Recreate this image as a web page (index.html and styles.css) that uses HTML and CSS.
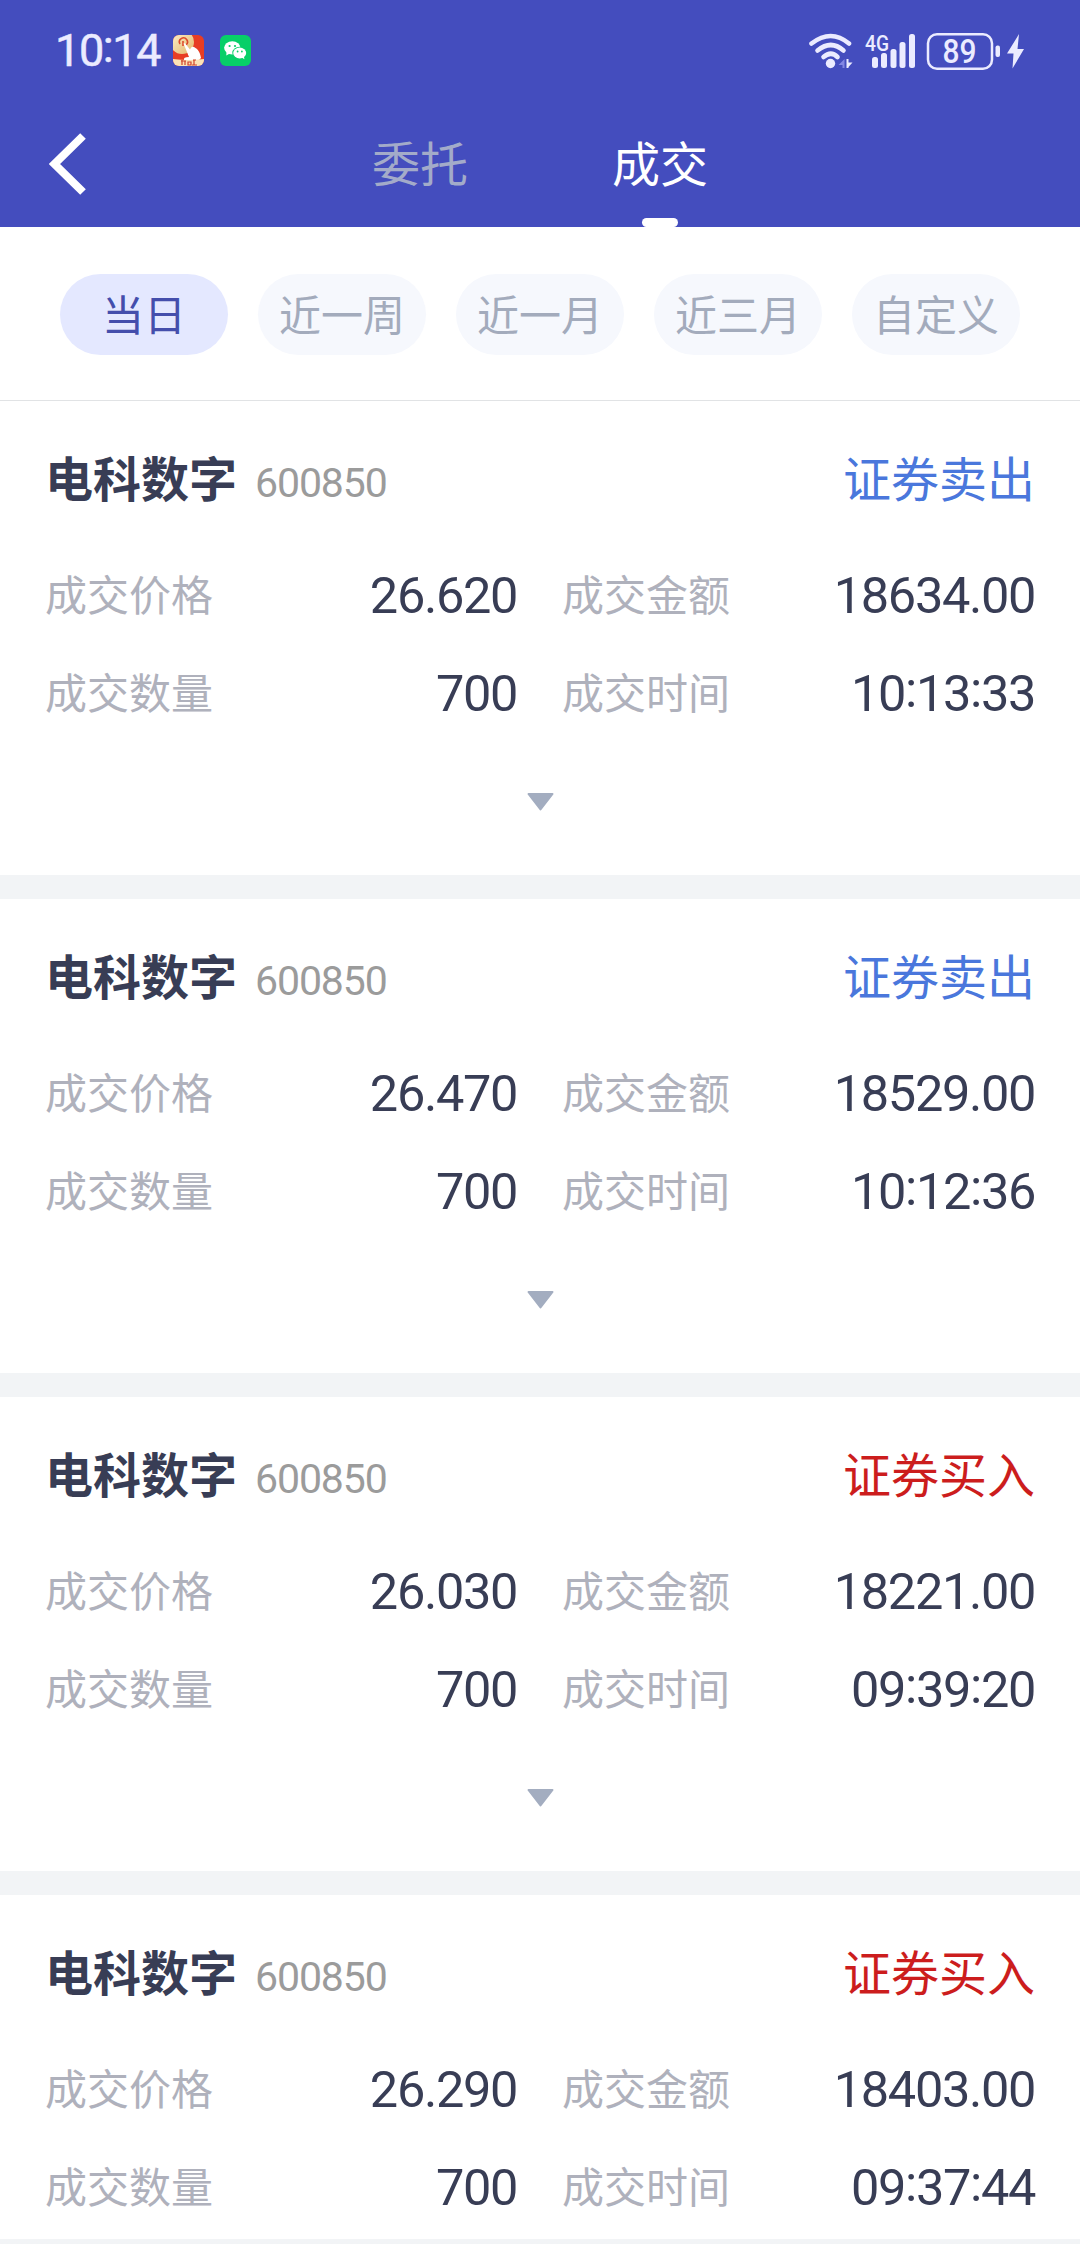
FILE: index.html
```html
<!DOCTYPE html>
<html lang="zh-CN">
<head>
<meta charset="utf-8">
<title>成交</title>
<link rel="stylesheet" href="styles.css">
</head>
<body>
<div class="app">
  <header class="header">
    <div class="status">
      <span class="clock">10<i class="colon">:</i>14</span>
      <svg class="app-icon" width="31" height="31" viewBox="0 0 31 31">
        <defs>
          <clipPath id="tile"><rect width="31" height="31" rx="6"/></clipPath>
          <linearGradient id="gold" x1="0" y1="0" x2="1" y2="1"><stop offset="0" stop-color="#fff3d6"/><stop offset="1" stop-color="#e3b869"/></linearGradient>
        </defs>
        <g clip-path="url(#tile)">
          <rect width="31" height="31" fill="#e83d24"/>
          <circle cx="9" cy="7" r="12" fill="url(#gold)"/>
          <path d="M7 9a4 4 0 1 1 6 1M10 6v5" fill="none" stroke="#dc4a2c" stroke-width="1.6"/>
          <path d="M10.500 8.500q1.500-1 2.500 1l4 5q1-3.500 4-2.500l3 2q3 3 4 9l-3 3-14-1q-1-3 5-3z" fill="#fff"/>
          <path d="M0 24q15 2 31 0v7H0z" fill="#fbe3b6"/>
          <path d="M8 26h5M9 25v5M12 26v4M15 27h3v3h-3zM20 25h3M21 25v5M19 30h5" fill="none" stroke="#d2422a" stroke-width="1.2"/>
        </g>
      </svg>
      <svg class="wechat-icon" width="31" height="31" viewBox="0 0 31 31">
        <rect width="31" height="31" rx="6" fill="#07cf68"/>
        <path d="M6.500 17l-.2 3.500 3.500-2z" fill="#fff"/>
        <ellipse cx="12.300" cy="12.800" rx="8.200" ry="6.600" fill="#fff"/>
        <ellipse cx="19.700" cy="18" rx="7.400" ry="6.200" fill="#07cf68"/>
        <ellipse cx="19.700" cy="18" rx="6.500" ry="5.400" fill="#fff"/>
        <path d="M21 22l3.400 2.200-.6-3.200z" fill="#fff"/>
        <g fill="#07cf68"><circle cx="9.600" cy="11" r="1.100"/><circle cx="15" cy="11" r="1.100"/><circle cx="17.600" cy="16.500" r=".9"/><circle cx="21.900" cy="16.500" r=".9"/></g>
      </svg>
      <svg class="signals" width="218" height="44" viewBox="0 -2 218 44">
        <g fill="none" stroke="#ebebff" stroke-width="4.600" stroke-linecap="round">
          <path d="M4.500 12.500Q24 -2.500 42 12.500"/>
          <path d="M10.500 19.500Q24 8.500 36.500 19.500"/>
          <path d="M16.500 26Q24 19.500 30.500 26"/>
        </g>
        <circle cx="23.500" cy="32.500" r="4.700" fill="#ebebff"/>
        <path d="M37.500 28v9h-2v-3h-4z" fill="#8387e4"/>
        <path d="M39.500 28h2v3.500h4l-4 4.500v1h-2z" fill="#ebebff"/>
        <text class="network" x="58" y="20" textLength="24" lengthAdjust="spacingAndGlyphs">4G</text>
        <g fill="#ebebff">
          <rect x="65" y="26" width="6" height="11" rx="2.500"/>
          <rect x="74" y="22" width="6" height="15" rx="2.500"/>
          <rect x="83.500" y="18" width="6" height="19" rx="2.500"/>
          <rect x="92.500" y="11" width="6" height="26" rx="2.500"/>
          <rect x="102" y="3" width="6" height="34" rx="2.500"/>
          <rect x="188.500" y="14.500" width="4.500" height="11.500" rx="2"/>
          <path d="M212 3L200 22.500H206.500L205.500 37.500L217 18H210.500Z"/>
        </g>
        <rect x="121" y="3.200" width="64" height="34.600" rx="9" fill="none" stroke="#ebebff" stroke-width="2.500"/>
        <text class="battery" x="135.500" y="32" textLength="34" lengthAdjust="spacingAndGlyphs">89</text>
      </svg>
    </div>
    <nav class="nav">
      <svg class="back" width="38" height="62" viewBox="0 0 38 62"><path d="M34 3L5.500 31L34 59" fill="none" stroke="#fff" stroke-width="8"/></svg>
      <a class="tab">委托</a>
      <a class="tab tab-active">成交</a>
    </nav>
  </header>

  <div class="filters">
    <span class="chip chip-active">当日</span>
    <span class="chip">近一周</span>
    <span class="chip">近一月</span>
    <span class="chip">近三月</span>
    <span class="chip">自定义</span>
  </div>

  <main class="list">
    <section class="card">
      <div class="card-head"><h2 class="name">电科数字</h2><span class="code">600850</span><span class="side sell">证券卖出</span></div>
      <dl class="grid">
        <dt>成交价格</dt><dd>26<i>.</i>620</dd><dt>成交金额</dt><dd>18634<i>.</i>00</dd>
        <dt>成交数量</dt><dd>700</dd><dt>成交时间</dt><dd>10<i class="colon">:</i>13<i class="colon">:</i>33</dd>
      </dl>
      <svg class="more" width="27" height="18" viewBox="0 0 27 18"><path d="M1.500 1H25.500L13.500 16.500Z"/></svg>
    </section>
    <section class="card">
      <div class="card-head"><h2 class="name">电科数字</h2><span class="code">600850</span><span class="side sell">证券卖出</span></div>
      <dl class="grid">
        <dt>成交价格</dt><dd>26<i>.</i>470</dd><dt>成交金额</dt><dd>18529<i>.</i>00</dd>
        <dt>成交数量</dt><dd>700</dd><dt>成交时间</dt><dd>10<i class="colon">:</i>12<i class="colon">:</i>36</dd>
      </dl>
      <svg class="more" width="27" height="18" viewBox="0 0 27 18"><path d="M1.500 1H25.500L13.500 16.500Z"/></svg>
    </section>
    <section class="card">
      <div class="card-head"><h2 class="name">电科数字</h2><span class="code">600850</span><span class="side buy">证券买入</span></div>
      <dl class="grid">
        <dt>成交价格</dt><dd>26<i>.</i>030</dd><dt>成交金额</dt><dd>18221<i>.</i>00</dd>
        <dt>成交数量</dt><dd>700</dd><dt>成交时间</dt><dd>09<i class="colon">:</i>39<i class="colon">:</i>20</dd>
      </dl>
      <svg class="more" width="27" height="18" viewBox="0 0 27 18"><path d="M1.500 1H25.500L13.500 16.500Z"/></svg>
    </section>
    <section class="card">
      <div class="card-head"><h2 class="name">电科数字</h2><span class="code">600850</span><span class="side buy">证券买入</span></div>
      <dl class="grid">
        <dt>成交价格</dt><dd>26<i>.</i>290</dd><dt>成交金额</dt><dd>18403<i>.</i>00</dd>
        <dt>成交数量</dt><dd>700</dd><dt>成交时间</dt><dd>09<i class="colon">:</i>37<i class="colon">:</i>44</dd>
      </dl>
    </section>
  </main>
  <footer class="bottom"></footer>
</div>
</body>
</html>
```
FILE: styles.css
```css
* { box-sizing: border-box; }
body { margin: 0; background: #fff; font-family: "Noto Sans CJK SC", sans-serif; }
svg { display: block; flex: none; }
i { font-style: normal; }
.app { display: flex; flex-direction: column; width: 1080px; height: 2244px; overflow: hidden; }

.header { flex: none; height: 227px; background: #444dbe; }
.status { display: flex; align-items: center; height: 101px; padding: 0 55px; }
.clock { width: 118px; font: 400 45px/61px Roboto, sans-serif; letter-spacing: -1.400px; color: #ebebff; -webkit-text-stroke: 0.5px #ebebff; }
.colon { line-height: 0; vertical-align: 4px; }
.wechat-icon { margin-left: 16px; }
.signals { margin-left: auto; }
.network { font: 500 22.500px Roboto, sans-serif; fill: #ebebff; }
.battery { font: 500 33px Roboto, sans-serif; fill: #ebebff; }
.nav { display: flex; align-items: center; height: 126px; padding-left: 49px; }
.back { margin-right: 285px; }
.tab { position: relative; height: 126px; font-size: 48px; line-height: 121px; color: #a3abc9; }
.tab-active { margin-left: 144px; color: #fff; }
.tab-active::after { content: ""; position: absolute; left: 30px; bottom: 0; width: 36px; height: 9px; border-radius: 5px; background: #fff; }

.filters { flex: none; display: flex; gap: 30px; height: 174px; padding: 47px 60px 0; border-bottom: 1px solid #e1e3e5; }
.chip { width: 168px; height: 81px; border-radius: 41px; background: #f6f8fd; color: #a3abbc; font-size: 42px; line-height: 78px; text-align: center; }
.chip-active { background: #e4e8ff; color: #444eac; }

.list { flex: 1; min-height: 0; overflow: hidden; }
.card { display: flex; flex-direction: column; height: 498px; padding: 39px 45px 0; border-bottom: 24px solid #f2f4f6; }
.card-head { display: flex; align-items: baseline; height: 107px; line-height: 72px; }
.name { margin: 0; font-size: 48px; font-weight: 700; color: #383d55; }
.code { margin-left: 18px; font-family: Roboto, sans-serif; font-size: 41px; letter-spacing: -1.100px; color: #9b9b9b; }
.side { margin-left: auto; font-size: 48px; }
.sell { color: #4a77dc; }
.buy { color: #cc1d1d; }
.grid { display: grid; grid-template-columns: 200px 272px 200px 1fr; grid-auto-rows: 98px; margin: 0; }
.grid dt { font-size: 42px; line-height: 92px; color: #afb1bc; white-space: nowrap; }
.grid dt:nth-of-type(even) { margin-left: 45px; }
.grid dd { margin: 0; font: 400 50.500px/98px Roboto, sans-serif; letter-spacing: -1.350px; text-align: right; color: #383d55; white-space: nowrap; }
.more { margin: 50px auto 0; fill: #a3adc0; stroke: #a3adc0; stroke-width: 2; stroke-linejoin: round; }
.bottom { flex: none; height: 5px; background: #f2f4f6; }
```
